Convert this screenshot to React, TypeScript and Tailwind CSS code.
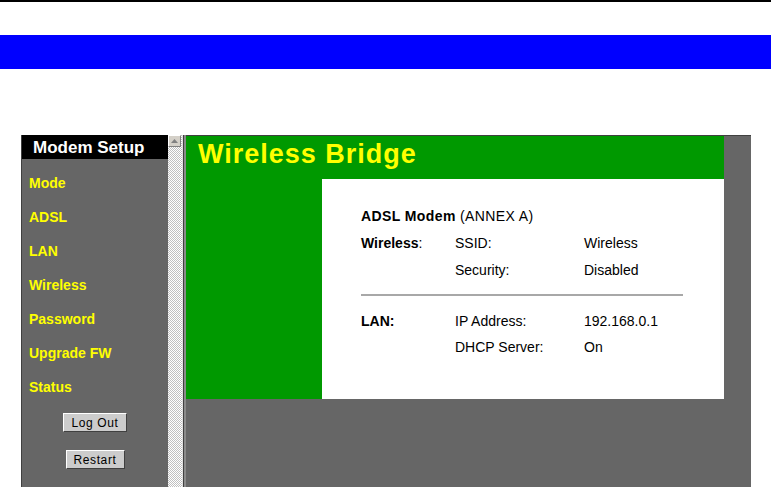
import React from "react";

const font = { fontFamily: '"Liberation Sans", Arial, sans-serif' };

function SideItem({ label }: { label: string }) {
  return (
    <div className="h-[34px] flex items-center pl-[7px] text-[14px] font-bold text-[#ffff00] leading-none">
      {label}
    </div>
  );
}

function Btn({ label, w }: { label: string; w: string }) {
  return (
    <div
      className={`${w} h-[19px] bg-[#cccccc] border-t border-l border-t-white border-l-white border-b border-r border-b-[#404040] border-r-[#404040] flex items-center justify-center text-[12px] text-black tracking-[0.6px] leading-none`}
    >
      {label}
    </div>
  );
}

function Row({ a, b, c, boldA, h = "h-[27px]" }: { a?: React.ReactNode; b: string; c: string; boldA?: boolean; h?: string }) {
  return (
    <div className={`${h} grid grid-cols-[94px_129px_1fr] items-center text-[14px] leading-none text-black`}>
      <div className={boldA ? "font-bold" : ""}>{a}</div>
      <div>{b}</div>
      <div>{c}</div>
    </div>
  );
}

export default function App() {
  return (
    <div className="w-[771px] h-[487px] bg-white overflow-hidden" style={font}>
      <div className="h-[2px] bg-black" />
      <div className="h-[33px]" />
      <div className="h-[34px] bg-[#0000ff]" />
      <div className="h-[66px]" />
      {/* frame */}
      <div className="ml-[21px] w-[730px] h-[352px] flex overflow-hidden">
        {/* left border */}
        <div className="w-[1px] bg-[#404040]" />
        {/* sidebar */}
        <div className="w-[146px] bg-[#666666] flex flex-col">
          <div className="h-[24px] bg-black flex items-center pl-[11px] text-[17px] font-bold text-white leading-none">
            Modem Setup
          </div>
          <div className="h-[7px]" />
          <SideItem label="Mode" />
          <SideItem label="ADSL" />
          <SideItem label="LAN" />
          <SideItem label="Wireless" />
          <SideItem label="Password" />
          <SideItem label="Upgrade FW" />
          <SideItem label="Status" />
          <div className="h-[9px]" />
          <div className="flex justify-center">
            <Btn label="Log Out" w="w-[64px]" />
          </div>
          <div className="h-[18px]" />
          <div className="flex justify-center">
            <Btn label="Restart" w="w-[59px]" />
          </div>
        </div>
        {/* scrollbar */}
        <div className="w-[14px] flex flex-col bg-[repeating-conic-gradient(#c0c0c0_0_25%,#ffffff_0_50%)] bg-[length:2px_2px]">
          <div className="w-[13px] h-[12px] bg-[#d4d0c8] border-t border-l border-t-white border-l-white border-b border-r border-b-[#808080] border-r-[#808080] flex items-center justify-center">
            <svg width="7" height="4" viewBox="0 0 7 4">
              <polygon points="3.5,0 7,4 0,4" fill="#808080" />
            </svg>
          </div>
        </div>
        {/* separator */}
        <div className="w-[1px] bg-[#e0e0e0]" />
        <div className="w-[1px] bg-[#404040]" />
        <div className="w-[2px] bg-[#8a8a8a]" />
        {/* right pane */}
        <div className="w-[565px] bg-[#666666] border-t border-t-[#404040] flex flex-col">
          <div className="w-[538px] h-[43px] bg-[#009900] pl-[12px] pt-[5px] text-[27px] leading-[27px] font-bold text-[#ffff00] tracking-[1px]">
            Wireless Bridge
          </div>
          <div className="w-[538px] h-[220px] flex">
            <div className="w-[136px] bg-[#009900]" />
            <div className="w-[402px] bg-white pl-[39px] pt-[23px]">
              <div className="h-[27px] flex items-center text-[14px] leading-none text-black tracking-[0.4px]">
                <span className="font-bold">ADSL Modem</span>
                <span>&nbsp;(ANNEX A)</span>
              </div>
              <Row
                a={
                  <>
                    <span className="font-bold">Wireless</span>:
                  </>
                }
                b="SSID:"
                c="Wireless"
              />
              <Row b="Security:" c="Disabled" />
              <div className="h-[11px]" />
              <div className="w-[322px] h-[2px] bg-[#a8a8a8]" />
              <div className="h-[12px]" />
              <Row a="LAN:" boldA b="IP Address:" c="192.168.0.1" h="h-[26px]" />
              <Row b="DHCP Server:" c="On" h="h-[26px]" />
            </div>
          </div>
        </div>
      </div>
    </div>
  );
}
